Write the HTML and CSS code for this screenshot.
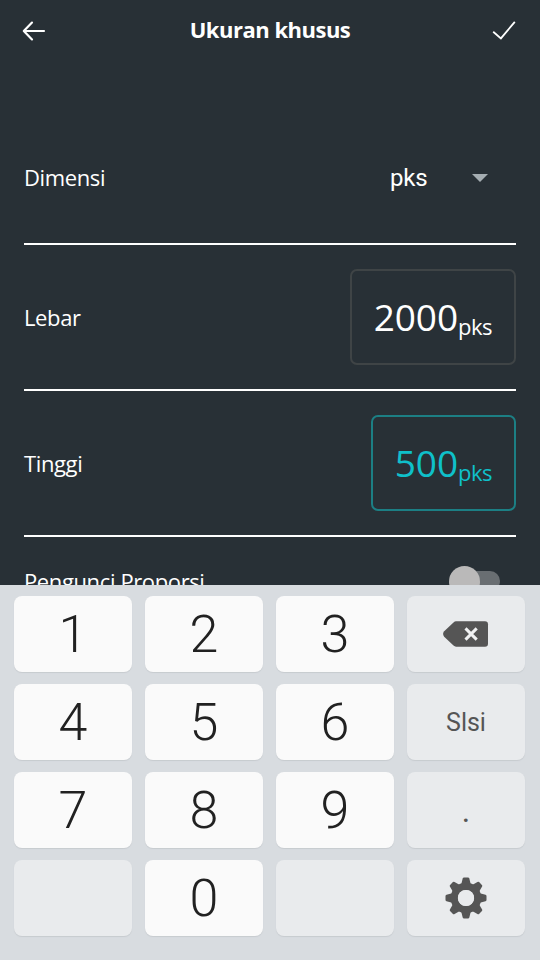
FILE: index.html
```html
<!DOCTYPE html>
<html lang="id">
<head>
<meta charset="utf-8">
<title>Ukuran khusus</title>
<link rel="stylesheet" href="styles.css">
</head>
<body>
<div class="screen">
  <header class="bar">
    <svg class="icon" width="24" height="24" viewBox="0 0 24 24"><path d="M22 12H2M10 3.6L1.8 12L10 20.4"/></svg>
    <h1 class="title">Ukuran khusus</h1>
    <svg class="icon icon-check" width="24" height="24" viewBox="0 0 24 24"><path d="M1.2 12.8L8.9 19.4L22.8 2.8"/></svg>
  </header>
  <main class="form">
    <div class="row row-unit">
      <span class="label">Dimensi</span>
      <span class="select">pks<i class="caret"></i></span>
    </div>
    <div class="row">
      <span class="label">Lebar</span>
      <div class="field"><span class="value">2000</span><span class="unit">pks</span></div>
    </div>
    <div class="row">
      <span class="label">Tinggi</span>
      <div class="field field-active"><span class="value">500</span><span class="unit">pks</span></div>
    </div>
    <div class="row row-lock">
      <span class="label">Pengunci Proporsi</span>
      <span class="switch"><i class="thumb"></i></span>
    </div>
  </main>
  <section class="keyboard">
    <div class="key">1</div><div class="key">2</div><div class="key">3</div>
    <div class="key soft glyph">
      <svg width="46" height="26" viewBox="0 0 46 26"><path fill="#555" d="M13 0.3H42Q45 0.3 45 3.3V22.7Q45 25.7 42 25.7H13Q11.8 25.7 10.5 24.6L1.2 15.7Q-1 13 1.2 10.3L10.5 1.4Q11.8 0.3 13 0.3Z"/><path fill="none" stroke="#f0f1f2" stroke-width="3" d="M22.5 7.4L33.7 18.6M33.7 7.4L22.5 18.6"/></svg>
    </div>
    <div class="key">4</div><div class="key">5</div><div class="key">6</div>
    <div class="key soft word">Slsi</div>
    <div class="key">7</div><div class="key">8</div><div class="key">9</div>
    <div class="key soft word dot">.</div>
    <div class="key soft"></div><div class="key">0</div><div class="key soft"></div>
    <div class="key soft glyph">
      <svg width="42" height="42" viewBox="-21 -21 42 42">
        <defs><path id="tooth" d="M-5.2 -12L-3.3 -19.5Q-3 -20.5 -2 -20.5H2Q3 -20.5 3.3 -19.5L5.2 -12Z"/></defs>
        <g fill="#555">
          <use href="#tooth"/><use href="#tooth" transform="rotate(45)"/><use href="#tooth" transform="rotate(90)"/><use href="#tooth" transform="rotate(135)"/><use href="#tooth" transform="rotate(180)"/><use href="#tooth" transform="rotate(225)"/><use href="#tooth" transform="rotate(270)"/><use href="#tooth" transform="rotate(315)"/>
        </g>
        <circle r="11.7" fill="none" stroke="#555" stroke-width="7.2"/>
        <circle r="8.1" fill="#e9ebed"/>
      </svg>
    </div>
  </section>
</div>
</body>
</html>
```
FILE: styles.css
```css
* { box-sizing: border-box; }
body { margin: 0; }
.screen {
  width: 540px;
  height: 960px;
  display: flex;
  flex-direction: column;
  overflow: hidden;
  background: #283036;
  color: #fff;
  font-family: "Open Sans", "Noto Sans", sans-serif;
}
.bar {
  flex: none;
  height: 61px;
  padding: 0 24px 0 22px;
  display: flex;
  align-items: center;
  justify-content: space-between;
}
.title { margin: 0; padding: 0 0 3px 2px; font-size: 22px; font-weight: 700; line-height: 30px; letter-spacing: -0.5px; }
.icon { fill: none; stroke: #fff; stroke-width: 2.2; stroke-linecap: round; stroke-linejoin: round; }
.icon-check { stroke-width: 1.8; stroke-linecap: butt; stroke-linejoin: miter; }
.form { flex: none; height: 524px; padding: 51px 24px 0; overflow: hidden; }
.row {
  height: 146px;
  border-bottom: 2px solid #fff;
  display: flex;
  align-items: center;
  justify-content: space-between;
}
.row-unit { height: 133px; }
.row-unit .label { padding-bottom: 1px; }
.row-lock { height: 90px; }
.label { font-size: 22px; line-height: 30px; letter-spacing: -0.38px; }
.select {
  width: 126px;
  padding-right: 28px;
  display: flex;
  align-items: center;
  justify-content: space-between;
  font: 24px/30px Roboto, sans-serif;
  letter-spacing: -0.2px;
}
.caret { border: 8px solid transparent; border-top-color: #a5adb2; border-bottom: 0; }
.field {
  height: 96px;
  padding: 0 22px;
  border: 2px solid #3f4446;
  border-radius: 7px;
  display: flex;
  align-items: center;
}
.field-active { border-color: #1c7f84; color: #0fc0ca; }
.value { font-size: 37px; line-height: 50px; letter-spacing: -0.1px; }
.unit { font-size: 22px; line-height: 30px; padding-top: 17px; letter-spacing: -0.5px; }
.switch {
  width: 43px;
  height: 20px;
  margin-right: 16px;
  display: flex;
  align-items: center;
  border-radius: 10px;
  background: #696e72;
}
.thumb { flex: none; width: 31px; height: 31px; margin-left: -8px; border-radius: 50%; background: #bab9b9; }
.keyboard {
  flex: 1;
  padding: 11px 15px 24px 14px;
  display: grid;
  grid-template-columns: repeat(4, 118px);
  grid-auto-rows: 76px;
  gap: 12px 13px;
  background: #d8dce0;
}
.key {
  display: flex;
  align-items: center;
  justify-content: center;
  padding-top: 2px;
  border-radius: 8px;
  background: #fafafa;
  box-shadow: 0 1px 1px #c7cbcf;
  color: #212121;
  font: 300 52px/74px Roboto, sans-serif;
}
.soft { background: #e9ebed; }
.glyph { padding-top: 0; }
.word { color: #555; font-size: 25px; font-weight: 400; }
.dot { font-size: 32px; }
```
